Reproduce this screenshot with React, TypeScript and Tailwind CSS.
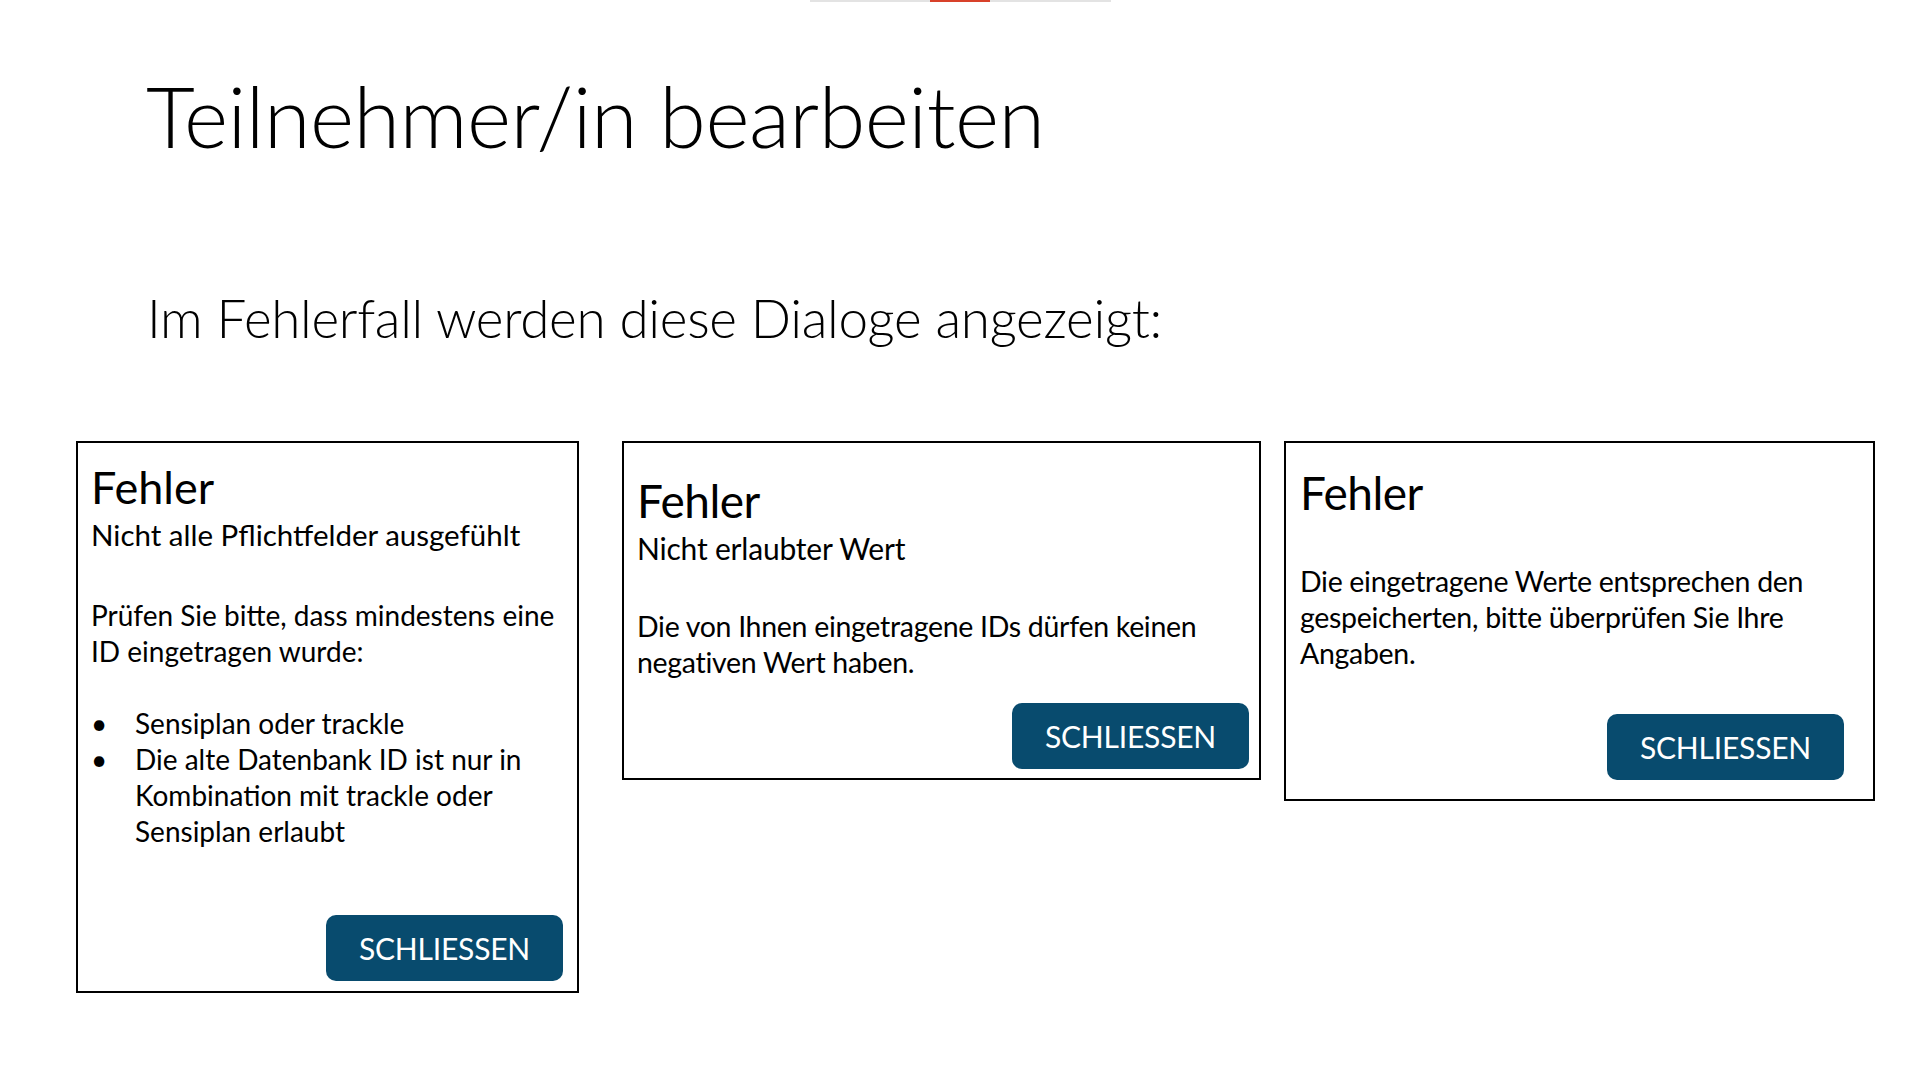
export default function App() {
  return (
    <div className="relative w-[1920px] h-[1080px] bg-white overflow-hidden text-black font-['Lato','Open_Sans',sans-serif]">
      {/* top slide indicator */}
      <div className="flex justify-center">
        <div className="flex w-[301px] h-[2px] bg-[#e3e3e3]">
          <div className="ml-[120px] w-[60px] h-[2px] bg-[#d8412a]" />
        </div>
      </div>

      <h1 className="ml-[146px] mt-[59px] text-[84.5px] leading-[110px] font-light tracking-[-0.5px]">
        Teilnehmer/in bearbeiten
      </h1>

      <p className="ml-[147px] mt-[115px] text-[53px] leading-[64px] font-light tracking-[-0.3px]">
        Im Fehlerfall werden diese Dialoge angezeigt:
      </p>

      <div className="mt-[91px] ml-[76px] flex items-start">
        {/* dialog 1 */}
        <div className="w-[503px] h-[552px] border-2 border-black flex flex-col pl-[13px] pr-[14px] pt-[18px] pb-[10px]">
          <div className="text-[45px] leading-[52px]">Fehler</div>
          <div className="mt-[4px] text-[29.5px] leading-[36px]">Nicht alle Pflichtfelder ausgefühlt</div>
          <div className="mt-[44px] text-[28px] leading-[36px]">
            Prüfen Sie bitte, dass mindestens eine ID eingetragen wurde:
          </div>
          <ul className="mt-[36px] text-[28px] leading-[36px]">
            <li className="flex">
              <span className="w-[44px] shrink-0">•</span>
              <span>Sensiplan oder trackle</span>
            </li>
            <li className="flex">
              <span className="w-[44px] shrink-0">•</span>
              <span>Die alte Datenbank ID ist nur in Kombination mit trackle oder Sensiplan erlaubt</span>
            </li>
          </ul>
          <button className="mt-auto self-end w-[237px] h-[66px] rounded-[10px] bg-[#084b6e] text-white text-[30px] tracking-[-0.2px]">
            SCHLIESSEN
          </button>
        </div>

        {/* dialog 2 */}
        <div className="ml-[43px] w-[639px] h-[339px] border-2 border-black flex flex-col pl-[13px] pr-[10px] pt-[32px] pb-[9px]">
          <div className="text-[46px] leading-[52px] tracking-[-0.5px]">Fehler</div>
          <div className="mt-[3px] text-[30px] leading-[36px] tracking-[-0.2px]">Nicht erlaubter Wert</div>
          <div className="mt-[42px] text-[28.5px] leading-[36px] tracking-[-0.3px]">
            Die von Ihnen eingetragene IDs dürfen keinen
            <br />
            negativen Wert haben.
          </div>
          <button className="mt-auto self-end w-[237px] h-[66px] rounded-[10px] bg-[#084b6e] text-white text-[30px] tracking-[-0.2px]">
            SCHLIESSEN
          </button>
        </div>

        {/* dialog 3 */}
        <div className="ml-[23px] w-[591px] h-[360px] border-2 border-black flex flex-col pl-[14px] pr-[29px] pt-[24px] pb-[19px]">
          <div className="text-[46px] leading-[52px] tracking-[-0.5px]">Fehler</div>
          <div className="mt-[44px] text-[28.5px] leading-[36px] tracking-[-0.3px]">
            Die eingetragene Werte entsprechen den
            <br />
            gespeicherten, bitte überprüfen Sie Ihre
            <br />
            Angaben.
          </div>
          <button className="mt-auto self-end w-[237px] h-[66px] rounded-[10px] bg-[#084b6e] text-white text-[30px] tracking-[-0.2px]">
            SCHLIESSEN
          </button>
        </div>
      </div>
    </div>
  );
}
